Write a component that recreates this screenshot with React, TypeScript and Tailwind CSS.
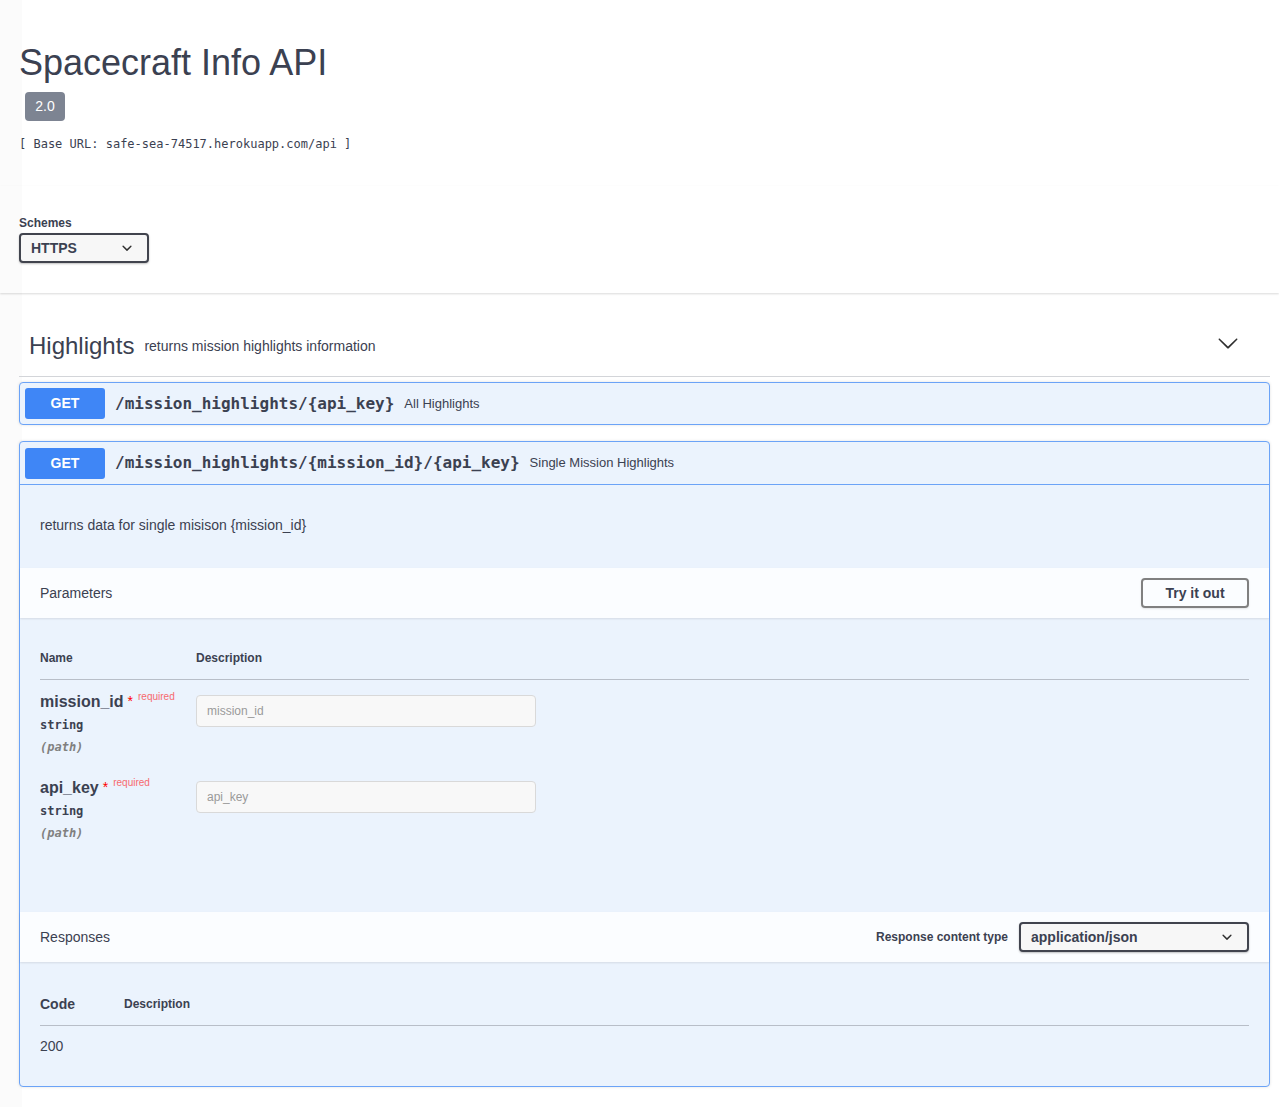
import React from "react";

const SelectArrow = () => (
  <svg viewBox="0 0 20 20" width={20} height={20} className="shrink-0">
    <path
      fill="#303030"
      d="M13.418 7.859a.695.695 0 01.978 0 .68.68 0 010 .969l-3.908 3.83a.697.697 0 01-.979 0l-3.908-3.83a.68.68 0 010-.969.695.695 0 01.978 0L10 11l3.418-3.141z"
    />
  </svg>
);

const BigArrow = () => (
  <svg viewBox="0 0 20 20" width={22} height={22} className="shrink-0 mr-[31px] -mt-[5px]">
    <path
      fill="#303030"
      d="M17.418 6.109c.272-.268.709-.268.979 0s.271.701 0 .969l-7.908 7.83c-.27.268-.707.268-.979 0l-7.908-7.83c-.27-.268-.27-.701 0-.969.271-.268.709-.268.979 0L10 13.25l7.418-7.141z"
    />
  </svg>
);

const GetBadge = () => (
  <div className="w-[80px] h-[31px] rounded-[3px] bg-[#3f86f6] text-white text-[14px] font-bold flex items-center justify-center shrink-0">
    GET
  </div>
);

const mono = "font-['DejaVu_Sans_Mono',monospace]";

const Param = ({ name }: { name: string }) => (
  <div className="flex h-[86px]">
    <div className="w-[156px] pt-[12px] shrink-0">
      <div className="h-[20px] leading-[20px] flex items-start whitespace-nowrap">
        <span className="text-[16px] font-bold">{name}</span>
        <span className="text-[14px] text-[#ff0000] ml-[4px] leading-[18px]">*</span>
        <span className="text-[10px] text-[#ff0000]/60 ml-[5px] leading-[12px] -mt-[1px]">required</span>
      </div>
      <div className={`${mono} text-[12px] font-bold leading-4 pt-[5px] pb-[5px]`}>string</div>
      <div className={`${mono} text-[12px] italic font-bold text-[#808080] leading-4 mt-[1px]`}>(path)</div>
    </div>
    <div className="pt-[15px]">
      <div className="w-[340px] h-[32px] border border-[#d9d9d9] rounded-[4px] bg-[#f8f8f8] flex items-center px-[10px] text-[12px] text-[#9a9a9a]">
        {name}
      </div>
    </div>
  </div>
);

export default function App() {
  return (
    <div className="min-h-screen bg-[linear-gradient(90deg,#fbfbfb_0,#fbfbfb_22px,#ffffff_22px)] text-[#3b4151] font-['Liberation_Sans',Arial,sans-serif]">
      {/* Info */}
      <div className="pl-[19px] pr-[9px] pt-[45px] pb-[34px]">
        <h2 className="text-[36px] leading-[36px] font-normal">Spacecraft Info API</h2>
        <div className="mt-[11px] ml-[6px] w-[40px] h-[29px] rounded-[4px] bg-[#7d8492] text-white text-[14px] flex items-center justify-center">
          2.0
        </div>
        <div className={`${mono} mt-[15px] text-[12px] leading-4`}>[ Base URL: safe-sea-74517.herokuapp.com/api ]</div>
      </div>

      {/* Schemes */}
      <div className="px-[19px] pt-[30px] pb-[30px] shadow-[0_1px_2px_0_rgba(0,0,0,0.15)]">
        <div className="text-[12px] font-bold leading-[15px] mb-[2px]">Schemes</div>
        <div className="w-[130px] h-[30px] border-2 border-[#41444e] rounded-[4px] bg-[#f7f7f7] shadow-[0_1px_2px_0_rgba(0,0,0,0.25)] flex items-center justify-between pl-[10px] pr-[10px]">
          <span className="text-[14px] font-bold">HTTPS</span>
          <SelectArrow />
        </div>
      </div>

      {/* Tag section */}
      <div className="pl-[19px] pr-[9px] pt-[21px] pb-[19px]">
        <div className="h-[63px] border-b border-[#d3d5d9] flex items-center justify-between pl-[10px]">
          <div className="flex items-center mt-[2px]">
            <span className="text-[24px] leading-[30px]">Highlights</span>
            <span className="text-[14px] ml-[10px]">returns mission highlights information</span>
          </div>
          <BigArrow />
        </div>

        {/* Opblock 1 */}
        <div className="mt-[5px] border border-[#6ba3f7] rounded-[4px] bg-[#ebf3fd] shadow-[0_0_3px_rgba(0,0,0,0.12)]">
          <div className="h-[41px] flex items-center pl-[5px]">
            <GetBadge />
            <span className={`${mono} text-[16px] font-bold pl-[10px] pr-[10px]`}>/mission_highlights/{"{api_key}"}</span>
            <span className="text-[13px]">All Highlights</span>
          </div>
        </div>

        {/* Opblock 2 */}
        <div className="mt-[16px] border border-[#6ba3f7] rounded-[4px] bg-[#ebf3fd] shadow-[0_0_3px_rgba(0,0,0,0.12)]">
          <div className="h-[43px] flex items-center pl-[5px] border-b border-[#6ba3f7]">
            <GetBadge />
            <span className={`${mono} text-[16px] font-bold pl-[10px] pr-[10px]`}>
              /mission_highlights/{"{mission_id}"}/{"{api_key}"}
            </span>
            <span className="text-[13px]">Single Mission Highlights</span>
          </div>

          <div className="px-[20px] pt-[30px] pb-[33px] text-[14px] leading-[20px]">
            returns data for single misison {"{mission_id}"}
          </div>

          <div className="h-[50px] bg-white/80 shadow-[0_1px_2px_rgba(0,0,0,0.1)] flex items-center justify-between px-[20px]">
            <span className="text-[14px] mt-[1px]">Parameters</span>
            <div className="w-[108px] h-[30px] border-2 border-[#808080] rounded-[4px] shadow-[0_1px_2px_rgba(0,0,0,0.1)] flex items-center justify-center text-[14px] font-bold">
              Try it out
            </div>
          </div>

          <div className="px-[20px] pt-[32px] pb-[60px]">
            <div className="flex pb-[13px] border-b border-[#b8bec8] text-[12px] font-bold leading-4">
              <div className="w-[156px]">Name</div>
              <div>Description</div>
            </div>
            <Param name="mission_id" />
            <Param name="api_key" />
          </div>

          <div className="h-[50px] bg-white/80 shadow-[0_1px_2px_rgba(0,0,0,0.1)] flex items-center justify-between px-[20px]">
            <span className="text-[14px]">Responses</span>
            <div className="flex items-center">
              <span className="text-[12px] font-bold mr-[11px]">Response content type</span>
              <div className="w-[230px] h-[30px] border-2 border-[#41444e] rounded-[4px] bg-[#f7f7f7] shadow-[0_1px_2px_0_rgba(0,0,0,0.25)] flex items-center justify-between pl-[10px] pr-[10px]">
                <span className="text-[14px] font-bold">application/json</span>
                <SelectArrow />
              </div>
            </div>
          </div>

          <div className="px-[20px] pt-[32px] pb-[30px]">
            <div className="flex items-center pb-[11px] border-b border-[#b8bec8] leading-[20px]">
              <div className="w-[84px] text-[14px] font-bold">Code</div>
              <div className="text-[12px] font-bold">Description</div>
            </div>
            <div className="pt-[10px] text-[14px] leading-[20px]">200</div>
          </div>
        </div>
      </div>
    </div>
  );
}
